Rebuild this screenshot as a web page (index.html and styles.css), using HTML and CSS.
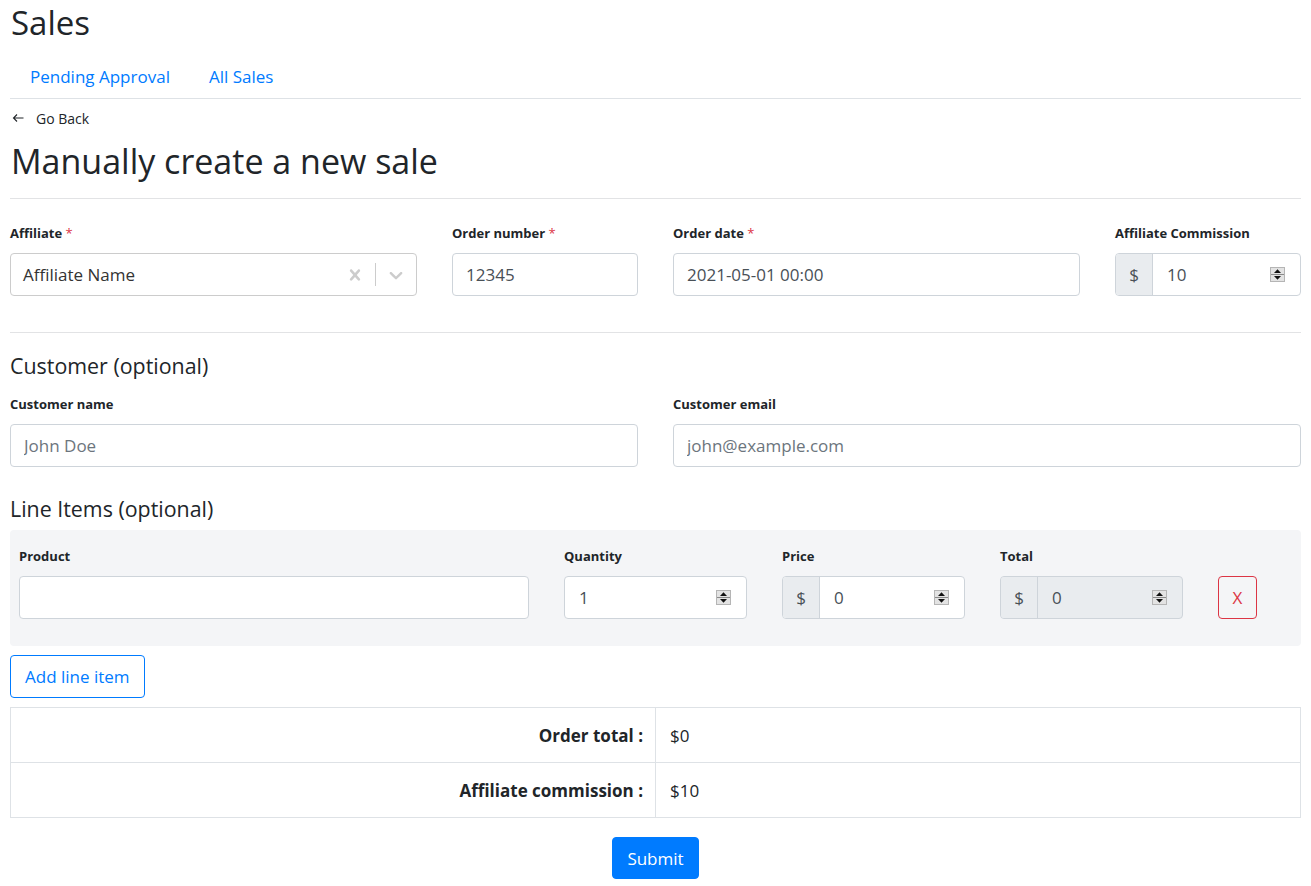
FILE: index.html
```html
<!DOCTYPE html>
<html lang="en">
<head>
<meta charset="utf-8">
<title>Sales</title>
<link rel="stylesheet" href="styles.css">
</head>
<body>
<div class="container">
  <h1 class="page-title">Sales</h1>
  <nav class="tabs">
    <a class="tab" href="#">Pending Approval</a>
    <a class="tab" href="#">All Sales</a>
  </nav>
  <a class="back" href="#">
    <svg class="back-arrow" width="12" height="10" viewBox="0 0 12 10"><path d="M11.5 5H1.5M5 1.5L1.5 5L5 8.5" fill="none" stroke="#212529" stroke-width="1.1"/></svg>
    <span>Go Back</span>
  </a>
  <h2 class="form-title">Manually create a new sale</h2>
  <hr class="rule rule-top">

  <div class="grid">
    <div class="field span-4">
      <label class="label">Affiliate <span class="req">*</span></label>
      <div class="select">
        <span class="select-value">Affiliate Name</span>
        <span class="select-ind">
          <svg width="22" height="22" viewBox="0 0 20 20"><path fill="#ccc" d="M14.348 14.849c-0.469 0.469-1.229 0.469-1.697 0l-2.651-3.030-2.651 3.029c-0.469 0.469-1.229 0.469-1.697 0-0.469-0.469-0.469-1.229 0-1.697l2.758-3.15-2.759-3.152c-0.469-0.469-0.469-1.228 0-1.697s1.228-0.469 1.697 0l2.652 3.031 2.651-3.031c0.469-0.469 1.228-0.469 1.697 0s0.469 1.229 0 1.697l-2.758 3.152 2.758 3.15c0.469 0.469 0.469 1.229 0 1.698z"/></svg>
        </span>
        <span class="select-sep"></span>
        <span class="select-ind">
          <svg width="22" height="22" viewBox="0 0 20 20"><path fill="#ccc" d="M4.516 7.548c0.436-0.446 1.043-0.481 1.576 0l3.908 3.747 3.908-3.747c0.533-0.481 1.141-0.446 1.574 0 0.436 0.445 0.408 1.197 0 1.615-0.406 0.418-4.695 4.502-4.695 4.502-0.217 0.223-0.502 0.335-0.787 0.335s-0.57-0.112-0.789-0.335c0 0-4.287-4.084-4.695-4.502s-0.436-1.17 0-1.615z"/></svg>
        </span>
      </div>
    </div>
    <div class="field span-2">
      <label class="label">Order number <span class="req">*</span></label>
      <input class="control" type="text" value="12345">
    </div>
    <div class="field span-4">
      <label class="label">Order date <span class="req">*</span></label>
      <input class="control" type="text" value="2021-05-01 00:00">
    </div>
    <div class="field span-2">
      <label class="label">Affiliate Commission</label>
      <div class="group">
        <span class="addon">$</span>
        <div class="num">
          <input class="num-input" type="text" value="10">
          <svg class="spin" width="15" height="15" viewBox="0 0 15 15"><rect x="0.5" y="0.5" width="14" height="14" fill="#e3e3e3" stroke="#b5b5b5"/><line x1="1" y1="7.5" x2="14" y2="7.5" stroke="#8a8a8a"/><path d="M7.5 2.2L11 6H4z" fill="#111"/><path d="M4 9H11L7.5 12.8z" fill="#111"/></svg>
        </div>
      </div>
    </div>
  </div>

  <hr class="rule rule-mid">

  <h4 class="section">Customer (optional)</h4>
  <div class="grid grid-customer">
    <div class="field span-6">
      <label class="label">Customer name</label>
      <input class="control" type="text" placeholder="John Doe">
    </div>
    <div class="field span-6">
      <label class="label">Customer email</label>
      <input class="control" type="text" placeholder="john@example.com">
    </div>
  </div>

  <h4 class="section section-items">Line Items (optional)</h4>
  <div class="items">
    <div class="grid">
      <div class="field span-5">
        <label class="label">Product</label>
        <input class="control" type="text">
      </div>
      <div class="field span-2">
        <label class="label">Quantity</label>
        <div class="num num-bordered">
          <input class="num-input" type="text" value="1">
          <svg class="spin" width="15" height="15" viewBox="0 0 15 15"><rect x="0.5" y="0.5" width="14" height="14" fill="#e3e3e3" stroke="#b5b5b5"/><line x1="1" y1="7.5" x2="14" y2="7.5" stroke="#8a8a8a"/><path d="M7.5 2.2L11 6H4z" fill="#111"/><path d="M4 9H11L7.5 12.8z" fill="#111"/></svg>
        </div>
      </div>
      <div class="field span-2">
        <label class="label">Price</label>
        <div class="group">
          <span class="addon">$</span>
          <div class="num">
            <input class="num-input" type="text" value="0">
            <svg class="spin" width="15" height="15" viewBox="0 0 15 15"><rect x="0.5" y="0.5" width="14" height="14" fill="#e3e3e3" stroke="#b5b5b5"/><line x1="1" y1="7.5" x2="14" y2="7.5" stroke="#8a8a8a"/><path d="M7.5 2.2L11 6H4z" fill="#111"/><path d="M4 9H11L7.5 12.8z" fill="#111"/></svg>
          </div>
        </div>
      </div>
      <div class="field span-2">
        <label class="label">Total</label>
        <div class="group group-disabled">
          <span class="addon">$</span>
          <div class="num">
            <input class="num-input" type="text" value="0" disabled>
            <svg class="spin" width="15" height="15" viewBox="0 0 15 15"><rect x="0.5" y="0.5" width="14" height="14" fill="#e3e3e3" stroke="#b5b5b5"/><line x1="1" y1="7.5" x2="14" y2="7.5" stroke="#8a8a8a"/><path d="M7.5 2.2L11 6H4z" fill="#111"/><path d="M4 9H11L7.5 12.8z" fill="#111"/></svg>
          </div>
        </div>
      </div>
      <div class="field span-1 field-remove">
        <button class="btn-remove" type="button">X</button>
      </div>
    </div>
  </div>

  <button class="btn-add" type="button">Add line item</button>

  <table class="totals">
    <tr>
      <th>Order total :</th>
      <td>$0</td>
    </tr>
    <tr>
      <th>Affiliate commission :</th>
      <td>$10</td>
    </tr>
  </table>

  <div class="actions">
    <button class="btn-submit" type="submit">Submit</button>
  </div>
</div>
</body>
</html>
```

FILE: styles.css
```css
* { box-sizing: border-box; }

body {
  margin: 0;
  font-family: "Open Sans", "Noto Sans", sans-serif;
  font-size: 17px;
  color: #212529;
  background: #fff;
}

.container {
  padding: 0 10px;
}

.page-title {
  margin: 3px 0 0 1px;
  font-size: 33px;
  font-weight: 400;
  line-height: 40px;
}

.tabs {
  display: flex;
  margin-top: 13px;
  border-bottom: 1px solid #dee2e6;
}

.tab {
  display: block;
  padding: 8px 19px 8px 20px;
  line-height: 26px;
  font-size: 17px;
  color: #007bff;
  text-decoration: none;
}

.back {
  display: flex;
  align-items: center;
  gap: 12px;
  margin-top: 9px;
  padding-left: 2px;
  height: 20px;
  font-size: 14px;
  color: #212529;
  text-decoration: none;
}

.back-arrow { display: block; }

.form-title {
  margin: 13px 0 0 1px;
  font-size: 34px;
  font-weight: 400;
  line-height: 40px;
}

.rule {
  border: 0;
  border-top: 1px solid #e2e3e5;
  margin: 0;
}

.rule-top { margin-top: 17px; margin-bottom: 24px; }
.rule-mid { margin-top: 36px; margin-bottom: 19px; }

.grid {
  display: grid;
  grid-template-columns: repeat(12, 1fr);
  column-gap: 35px;
}

.span-1 { grid-column: span 1; }
.span-2 { grid-column: span 2; }
.span-4 { grid-column: span 4; }
.span-5 { grid-column: span 5; }
.span-6 { grid-column: span 6; }

.field {
  display: flex;
  flex-direction: column;
  min-width: 0;
}

.label {
  display: block;
  font-size: 13px;
  font-weight: 700;
  line-height: 20px;
  margin-bottom: 10px;
}

.req { color: #dc3545; font-weight: 400; }

.control {
  display: block;
  width: 100%;
  height: 43px;
  padding: 0 13px;
  font-family: inherit;
  font-size: 17px;
  color: #495057;
  background: #fff;
  border: 1px solid #ced4da;
  border-radius: 4px;
  outline: none;
}

.control::placeholder { color: #6c757d; }

.select {
  display: flex;
  align-items: center;
  height: 43px;
  border: 1px solid #ccc;
  border-radius: 4px;
  background: #fff;
}

.select-value {
  flex: 1;
  padding-left: 12px;
  font-size: 17px;
  color: #333;
}

.select-ind {
  display: flex;
  padding: 9px;
}

.select-ind svg { display: block; }

.select-sep {
  width: 1px;
  height: 23px;
  background: #ccc;
}

.group {
  display: flex;
  height: 43px;
  border: 1px solid #ced4da;
  border-radius: 4px;
  background: #fff;
  overflow: hidden;
}

.addon {
  display: flex;
  align-items: center;
  justify-content: center;
  width: 37px;
  flex: none;
  background: #e9ecef;
  border-right: 1px solid #ced4da;
  font-size: 17px;
  color: #495057;
}

.num {
  flex: 1;
  display: flex;
  align-items: center;
  min-width: 0;
  padding-right: 15px;
}

.num-bordered {
  height: 43px;
  border: 1px solid #ced4da;
  border-radius: 4px;
  background: #fff;
}

.num-input {
  flex: 1;
  min-width: 0;
  height: 100%;
  padding: 0 0 0 14px;
  border: 0;
  outline: none;
  background: transparent;
  font-family: inherit;
  font-size: 17px;
  color: #495057;
}

.spin { display: block; flex: none; }

.group-disabled { background: #e9ecef; }
.group-disabled .addon { border-right-color: #ced4da; }
.group-disabled .num-input { color: #495057; }

.section {
  margin: 0;
  font-size: 21.4px;
  font-weight: 400;
  line-height: 28px;
}

.grid-customer { margin-top: 14px; }

.section-items { margin-top: 28px; }

.items {
  margin-top: 7px;
  padding: 16px 9px 27px;
  background: #f4f5f7;
  border-radius: 4px;
}

.field-remove {
  justify-content: flex-end;
}

.btn-remove {
  width: 39px;
  height: 43px;
  padding: 0;
  font-family: inherit;
  font-size: 17px;
  color: #dc3545;
  background: transparent;
  border: 1px solid #dc3545;
  border-radius: 4px;
}

.btn-add {
  display: block;
  margin-top: 9px;
  height: 43px;
  padding: 0 14px;
  font-family: inherit;
  font-size: 17px;
  color: #007bff;
  background: #fff;
  border: 1px solid #007bff;
  border-radius: 4px;
}

.totals {
  width: 100%;
  margin-top: 9px;
  border-collapse: collapse;
  table-layout: fixed;
}

.totals th,
.totals td {
  height: 55px;
  border: 1px solid #dee2e6;
  font-size: 17px;
  vertical-align: middle;
}

.totals th {
  text-align: right;
  font-weight: 700;
  padding: 0 12px;
}

.totals td {
  text-align: left;
  padding: 0 14px;
}

.actions {
  display: flex;
  justify-content: center;
  margin-top: 19px;
}

.btn-submit {
  height: 42px;
  padding: 0 14px;
  font-family: inherit;
  font-size: 17px;
  color: #fff;
  background: #007bff;
  border: 1px solid #007bff;
  border-radius: 4px;
}
```
